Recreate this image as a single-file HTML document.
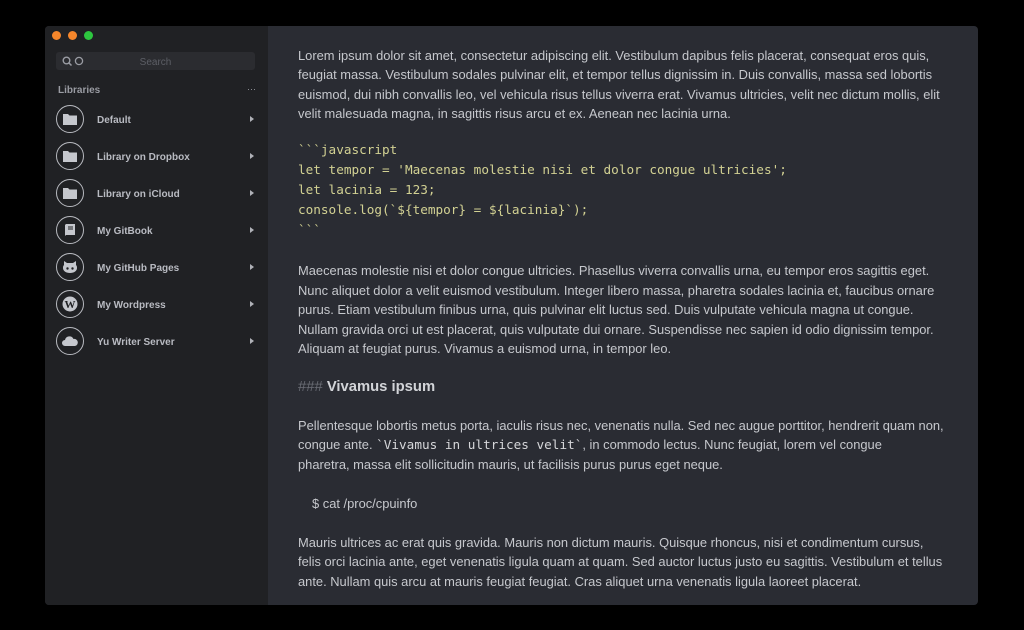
<!DOCTYPE html>
<html><head><meta charset="utf-8"><style>
*{margin:0;padding:0;box-sizing:border-box}
body{width:1024px;height:630px;background:#000;position:relative;overflow:hidden;font-family:"Liberation Sans",sans-serif}
.win{position:absolute;left:45px;top:26px;width:933px;height:579px;background:#2a2c33;border-radius:4px;overflow:hidden}
.side{position:absolute;left:0;top:0;width:223px;height:579px;background:#202124}
.dot{position:absolute;top:5px;width:9px;height:9px;border-radius:50%}
.search{position:absolute;left:11px;top:26px;width:199px;height:18px;background:#2b2c30;border-radius:3px;color:#5d5f66;font-size:10px;text-align:center;line-height:18px;padding-top:2px}
.lib{position:absolute;left:13px;top:59px;color:#9a9ca3;font-size:10px;font-weight:bold}
.item{position:absolute;left:11px;width:200px;height:28px}
.circ{position:absolute;left:0;top:0;width:28px;height:28px;border:1.5px solid #b8bac0;border-radius:50%}
.circ svg{position:absolute;left:4px;top:4px}
.lbl{position:absolute;left:41px;top:10px;color:#b9bbc2;font-size:10px;font-weight:bold}
.arr{position:absolute;left:194px;top:11px;width:0;height:0;border-left:4px solid #b0b2b8;border-top:3px solid transparent;border-bottom:3px solid transparent}
.t{position:absolute;left:253px;color:#c6c8cd;font-size:12.9px;white-space:nowrap;line-height:18px}
.c{position:absolute;left:253px;color:#d2d193;font-family:"DejaVu Sans Mono","Liberation Mono",monospace;font-size:12.7px;white-space:nowrap;line-height:18px}
.m{font-family:"DejaVu Sans Mono",monospace;font-size:12.7px;color:#d6d7da}
</style></head><body>
<div class="win">
<div class="side">
<div class="dot" style="left:7px;background:#f5862b"></div>
<div class="dot" style="left:23px;background:#f5862b"></div>
<div class="dot" style="left:39px;background:#2dc63f"></div>
<div class="search">Search
<svg style="position:absolute;left:6px;top:4px" width="24" height="11" viewBox="0 0 24 11"><circle cx="4.5" cy="4.5" r="3.3" fill="none" stroke="#9a9ca3" stroke-width="1.4"/><path d="M7 7l2.5 2.5" stroke="#9a9ca3" stroke-width="1.5"/><circle cx="17" cy="5" r="3.6" fill="none" stroke="#9a9ca3" stroke-width="1.3"/></svg></div>
<div class="lib">Libraries</div>
<div style="position:absolute;left:202px;top:58px;color:#9a9ca3;font-size:9px">···</div>

<div class="item" style="top:79px"><div class="circ"><svg width="18" height="18" viewBox="0 0 18 18"><path d="M2 4h5l1.5 1.5H16V15H2z" fill="#c5c7cd"/></svg></div><div class="lbl">Default</div><div class="arr"></div></div>
<div class="item" style="top:116px"><div class="circ"><svg width="18" height="18" viewBox="0 0 18 18"><path d="M2 4h5l1.5 1.5H16V15H2z" fill="#c5c7cd"/></svg></div><div class="lbl">Library on Dropbox</div><div class="arr"></div></div>
<div class="item" style="top:153px"><div class="circ"><svg width="18" height="18" viewBox="0 0 18 18"><path d="M2 4h5l1.5 1.5H16V15H2z" fill="#c5c7cd"/></svg></div><div class="lbl">Library on iCloud</div><div class="arr"></div></div>
<div class="item" style="top:190px"><div class="circ"><svg width="18" height="18" viewBox="0 0 18 18"><path d="M5 3h9v11H5l-1 1V4z" fill="#c5c7cd"/><path d="M7 6h5M7 8h5" stroke="#202124" stroke-width="1"/></svg></div><div class="lbl">My GitBook</div><div class="arr"></div></div>
<div class="item" style="top:227px"><div class="circ"><svg width="18" height="18" viewBox="0 0 18 18"><path d="M3 3l3 2h6l3-2v4c1 1 1 2 1 3 0 3-3 5-7 5s-7-2-7-5c0-1 0-2 1-3z" fill="#c5c7cd"/><circle cx="6.5" cy="10.5" r="1.2" fill="#202124"/><circle cx="11.5" cy="10.5" r="1.2" fill="#202124"/></svg></div><div class="lbl">My GitHub Pages</div><div class="arr"></div></div>
<div class="item" style="top:264px"><div class="circ"><svg width="18" height="18" viewBox="0 0 18 18"><circle cx="9" cy="9" r="7.5" fill="#c5c7cd"/><text x="9" y="13" font-family="Liberation Serif" font-weight="bold" font-size="11" text-anchor="middle" fill="#202124">W</text></svg></div><div class="lbl">My Wordpress</div><div class="arr"></div></div>
<div class="item" style="top:301px"><div class="circ"><svg width="18" height="18" viewBox="0 0 18 18"><path d="M4 14a3 3 0 0 1 0-6 4.5 4.5 0 0 1 8.5-1A3.5 3.5 0 0 1 14 14z" fill="#c5c7cd"/></svg></div><div class="lbl">Yu Writer Server</div><div class="arr"></div></div>
</div>

<div class="t" style="top:21px">Lorem ipsum dolor sit amet, consectetur adipiscing elit. Vestibulum dapibus felis placerat, consequat eros quis,</div>
<div class="t" style="top:40px">feugiat massa. Vestibulum sodales pulvinar elit, et tempor tellus dignissim in. Duis convallis, massa sed lobortis</div>
<div class="t" style="top:60px">euismod, dui nibh convallis leo, vel vehicula risus tellus viverra erat. Vivamus ultricies, velit nec dictum mollis, elit</div>
<div class="t" style="top:79px">velit malesuada magna, in sagittis risus arcu et ex. Aenean nec lacinia urna.</div>

<div class="c" style="top:115px">&#96;&#96;&#96;javascript</div>
<div class="c" style="top:135px">let tempor = 'Maecenas molestie nisi et dolor congue ultricies';</div>
<div class="c" style="top:155px">let lacinia = 123;</div>
<div class="c" style="top:175px">console.log(&#96;&#36;&#123;tempor&#125; = &#36;&#123;lacinia&#125;&#96;);</div>
<div class="c" style="top:195px">&#96;&#96;&#96;</div>

<div class="t" style="top:236px">Maecenas molestie nisi et dolor congue ultricies. Phasellus viverra convallis urna, eu tempor eros sagittis eget.</div>
<div class="t" style="top:256px">Nunc aliquet dolor a velit euismod vestibulum. Integer libero massa, pharetra sodales lacinia et, faucibus ornare</div>
<div class="t" style="top:275px">purus. Etiam vestibulum finibus urna, quis pulvinar elit luctus sed. Duis vulputate vehicula magna ut congue.</div>
<div class="t" style="top:295px">Nullam gravida orci ut est placerat, quis vulputate dui ornare. Suspendisse nec sapien id odio dignissim tempor.</div>
<div class="t" style="top:314px">Aliquam at feugiat purus. Vivamus a euismod urna, in tempor leo.</div>

<div class="t" style="top:352px;font-size:14.8px;font-weight:bold;color:#d2d4d8"><span style="color:#6b6e76;font-weight:normal">###</span> Vivamus ipsum</div>

<div class="t" style="top:391px">Pellentesque lobortis metus porta, iaculis risus nec, venenatis nulla. Sed nec augue porttitor, hendrerit quam non,</div>
<div class="t" style="top:410px">congue ante. <span class="m">&#96;Vivamus in ultrices velit&#96;</span>, in commodo lectus. Nunc feugiat, lorem vel congue</div>
<div class="t" style="top:430px">pharetra, massa elit sollicitudin mauris, ut facilisis purus purus eget neque.</div>

<div class="t" style="top:469px;left:267px">&#36; cat /proc/cpuinfo</div>

<div class="t" style="top:508px">Mauris ultrices ac erat quis gravida. Mauris non dictum mauris. Quisque rhoncus, nisi et condimentum cursus,</div>
<div class="t" style="top:527px">felis orci lacinia ante, eget venenatis ligula quam at quam. Sed auctor luctus justo eu sagittis. Vestibulum et tellus</div>
<div class="t" style="top:547px">ante. Nullam quis arcu at mauris feugiat feugiat. Cras aliquet urna venenatis ligula laoreet placerat.</div>
</div>
</body></html>
